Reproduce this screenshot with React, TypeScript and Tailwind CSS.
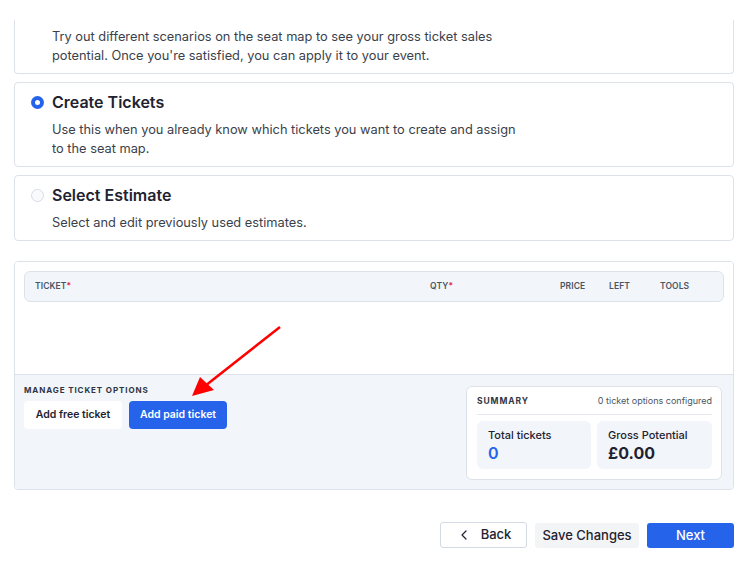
import { ChevronLeft } from "lucide-react";

function Radio({ checked }: { checked: boolean }) {
  return checked ? (
    <span className="w-[13px] h-[13px] rounded-full bg-[#2563eb] flex items-center justify-center shrink-0">
      <span className="w-[5px] h-[5px] rounded-full bg-white" />
    </span>
  ) : (
    <span className="w-[13px] h-[13px] rounded-full border border-[#d7dce5] bg-[#f9fafb] shrink-0" />
  );
}

function OptionCard({
  title,
  checked,
  lines,
}: {
  title: string;
  checked: boolean;
  lines: string[];
}) {
  return (
    <div className="border border-[#dde2ea] rounded-[4px] bg-white pl-[16px] pt-[7px] pb-[8px]">
      <div className="flex items-center gap-[8px] h-[24px]">
        <Radio checked={checked} />
        <div className="text-[16px] font-semibold text-[#1f2230] leading-[24px]">{title}</div>
      </div>
      <div className="pl-[21px] pt-[6px] text-[12.8px] leading-[19px] text-[#3a3f4b]">
        {lines.map((l) => (
          <div key={l}>{l}</div>
        ))}
      </div>
    </div>
  );
}

export default function App() {
  return (
    <div
      className="relative w-[752px] h-[572px] bg-white overflow-hidden"
      style={{ fontFamily: "Inter, 'Noto Sans', sans-serif" }}
    >
      <div className="px-[14px] pr-[18px] pt-[20px] flex flex-col">
        <div className="border border-t-0 border-[#dde2ea] rounded-b-[4px] pl-[37px] pt-[7px] pb-[8px] text-[12.8px] leading-[19px] text-[#3a3f4b]">
          <div>Try out different scenarios on the seat map to see your gross ticket sales</div>
          <div>potential. Once you're satisfied, you can apply it to your event.</div>
        </div>

        <div className="mt-[8px] flex flex-col gap-[8px]">
          <OptionCard
            title="Create Tickets"
            checked
            lines={[
              "Use this when you already know which tickets you want to create and assign",
              "to the seat map.",
            ]}
          />
          <OptionCard
            title="Select Estimate"
            checked={false}
            lines={["Select and edit previously used estimates."]}
          />
        </div>

        <div className="mt-[20px] border border-[#dde2ea] rounded-[4px] overflow-hidden">
          <div className="bg-white p-[9px] h-[113px] border-b border-[#dde2ea]">
            <div className="h-[31px] rounded-[6px] border border-[#dde2ea] bg-[#f2f5fa] flex items-center text-[8.5px] font-semibold tracking-[0.1px] text-[#4b5563] uppercase">
              <div className="pl-[10px] w-[405px]">
                Ticket<span className="text-[#e11d48]">*</span>
              </div>
              <div className="w-[130px]">
                Qty<span className="text-[#e11d48]">*</span>
              </div>
              <div className="w-[49px]">Price</div>
              <div className="w-[51px]">Left</div>
              <div>Tools</div>
            </div>
          </div>
          <div className="bg-[#f2f5fa] h-[114px] flex justify-between pl-[9px] pr-[11px] pt-[11px]">
            <div>
              <div className="text-[8px] font-bold tracking-[0.9px] text-[#2f3542] uppercase leading-[10px] -mt-[1px]">
                Manage ticket options
              </div>
              <div className="flex gap-[7px] mt-[6px]">
                <button className="h-[28px] w-[98px] rounded-[4px] bg-white text-[10.5px] font-semibold text-[#1f2230]">
                  Add free ticket
                </button>
                <button className="h-[28px] w-[98px] rounded-[4px] bg-[#2563eb] text-[10.5px] font-semibold text-white">
                  Add paid ticket
                </button>
              </div>
            </div>
            <div className="w-[256px] h-[94px] rounded-[6px] border border-[#dde2ea] bg-white pl-[10px] pr-[9px] pt-[9px]">
              <div className="flex justify-between items-start h-[19px] border-b border-[#e5e8ee] leading-[10px]">
                <div className="text-[8.5px] font-bold tracking-[0.9px] text-[#2f3542]">SUMMARY</div>
                <div className="text-[9px] text-[#4b5563]">0 ticket options configured</div>
              </div>
              <div className="flex gap-[6px] mt-[6px]">
                <div className="w-[114px] h-[48px] rounded-[6px] bg-[#f2f5fa] px-[11px] pt-[7px]">
                  <div className="text-[11px] font-medium text-[#1f2230] leading-[14px]">Total tickets</div>
                  <div className="text-[16px] font-semibold text-[#2563eb] leading-[22px]">0</div>
                </div>
                <div className="w-[115px] h-[48px] rounded-[6px] bg-[#f2f5fa] px-[11px] pt-[7px]">
                  <div className="text-[11px] font-medium text-[#1f2230] leading-[14px]">Gross Potential</div>
                  <div className="text-[16px] font-bold text-[#1f2230] leading-[22px]">£0.00</div>
                </div>
              </div>
            </div>
          </div>
        </div>

        <div className="mt-[32px] flex justify-end gap-[8px]">
          <button className="h-[26px] w-[87px] rounded-[3px] border border-[#d3dae4] bg-white flex items-center justify-center gap-[9px] text-[13px] font-medium text-[#1f2230]">
            <ChevronLeft size={16} strokeWidth={1.8} />
            Back
          </button>
          <button className="h-[25px] w-[104px] rounded-[3px] bg-[#f3f4f6] text-[13px] font-medium text-[#1f2230] mt-[1px]">
            Save Changes
          </button>
          <button className="h-[25px] w-[87px] rounded-[3px] bg-[#2563eb] text-[13px] font-medium text-white mt-[1px]">
            Next
          </button>
        </div>
      </div>

      <svg className="absolute left-0 top-0 pointer-events-none" width="752" height="572">
        <line x1="280" y1="327" x2="205" y2="386" stroke="#ff0000" strokeWidth="2.5" />
        <polygon points="192,396 200,377 214,390" fill="#ff0000" />
      </svg>
    </div>
  );
}
